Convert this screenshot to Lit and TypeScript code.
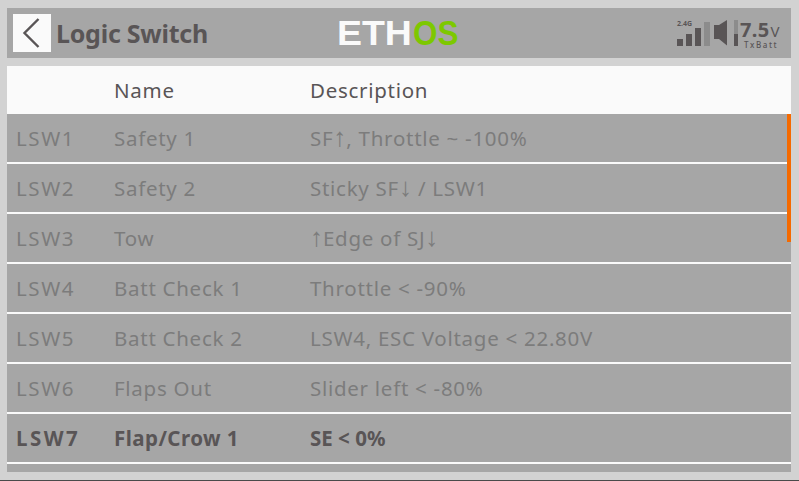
import { LitElement, html, css } from "lit";
import { customElement } from "lit/decorators.js";

const rows = [
  ["LSW1", "Safety 1", "SF↑, Throttle ~ -100%"],
  ["LSW2", "Safety 2", "Sticky SF↓ / LSW1"],
  ["LSW3", "Tow", "↑Edge of SJ↓"],
  ["LSW4", "Batt Check 1", "Throttle < -90%"],
  ["LSW5", "Batt Check 2", "LSW4, ESC Voltage < 22.80V"],
  ["LSW6", "Flaps Out", "Slider left < -80%"],
  ["LSW7", "Flap/Crow 1", "SE < 0%"],
];

const withArrows = (text: string) =>
  text.split(/([↑↓])/).map((part) => (part === "↑" || part === "↓" ? html`<span class="arrow">${part}</span>` : part));

@customElement("app-root")
export class AppRoot extends LitElement {
  static styles = css`
    :host {
      display: block;
      width: 799px;
      height: 481px;
      overflow: hidden;
      background: #d2d2d2;
      font-family: "Noto Sans", "Open Sans", sans-serif;
      color: #595556;
    }
    .page {
      display: flex;
      flex-direction: column;
      height: 480px;
      padding: 8px 8px 8px 7px;
      box-sizing: border-box;
    }
    .rule { height: 1px; background: #4a4a4a; }
    .head {
      height: 50px;
      flex: none;
      background: #a6a6a6;
      display: flex;
      align-items: center;
      padding: 0 11px 0 6px;
    }
    .back {
      width: 38px;
      height: 38px;
      background: #fafafa;
      display: flex;
      align-items: center;
      justify-content: center;
    }
    .back svg { display: block; }
    .title {
      width: 281px;
      margin-left: 5px;
      font-size: 25px;
      font-weight: 700;
      line-height: 36px;
      letter-spacing: -0.25px;
      white-space: nowrap;
    }
    .logo {
      display: flex;
      width: 122px;
      height: 26px;
      font-family: "Liberation Sans", sans-serif;
      font-weight: 700;
      font-size: 35px;
      line-height: 26px;
    }
    .eth { width: 76px; color: #fafafa; transform: scaleX(1.07); transform-origin: left center; white-space: nowrap; }
    .os { width: 46px; color: #7dc800; transform: scaleX(0.9); transform-origin: left center; white-space: nowrap; }
    .status { margin-left: auto; display: flex; align-items: flex-start; height: 26px; }
    .bars { position: relative; display: flex; align-items: flex-end; gap: 3px; height: 26px; width: 33px; }
    .bars i { display: block; flex: none; width: 6px; background: #595556; }
    .bars i.off { background: #8c8c8c; }
    .ghz { position: absolute; left: 0; top: 0; font-size: 7px; font-weight: 700; line-height: 8px; white-space: nowrap; }
    .speaker { display: block; margin-left: 4px; }
    .batt { margin-left: 2px; width: 40px; }
    .volt { display: flex; align-items: baseline; font-size: 20px; font-weight: 700; line-height: 19px; letter-spacing: 0.3px; white-space: nowrap; }
    .volt span { font-size: 15px; font-weight: 400; margin-left: 1px; }
    .tx { font-size: 8px; font-weight: 500; line-height: 7px; letter-spacing: 1.6px; white-space: nowrap; margin-left: 4px; }
    .table { margin-top: 8px; flex: 1; background: #a6a6a6; position: relative; overflow: hidden; }
    .row {
      display: grid;
      grid-template-columns: 98px 196px 1fr;
      align-items: center;
      box-sizing: border-box;
      height: 50px;
      border-bottom: 2px solid #fafafa;
      padding-left: 9px;
      font-size: 20.5px;
      letter-spacing: 0.72px;
      color: #7c7c7c;
      white-space: nowrap;
    }
    .row > span:first-child { letter-spacing: 1.6px; }
    .row.th { height: 48px; border: 0; background: #fafafa; color: #595556; }
    .row.active { color: #595556; font-weight: 700; letter-spacing: 0.45px; }
    .row.active > span:first-child { letter-spacing: 2.5px; }
    .row.active > span:last-child { letter-spacing: 0; }
    .arrow { font-family: "Liberation Sans", sans-serif; font-size: 26px; line-height: 0; letter-spacing: 0; }
    .thumb { position: absolute; right: 0; top: 48px; width: 4px; height: 128px; background: #f56a00; }
  `;

  render() {
    return html`
      <div class="page">
        <div class="head">
          <div class="back">
            <svg width="38" height="38" viewBox="0 0 38 38" fill="none">
              <path d="M25.5 5 L11.5 19 L25.5 33" stroke="#595556" stroke-width="2.4" />
            </svg>
          </div>
          <div class="title">Logic Switch</div>
          <div class="logo"><span class="eth">ETH</span><span class="os">OS</span></div>
          <div class="status">
            <div class="bars">
              <span class="ghz">2.4G</span>
              <i style="height:7px"></i><i style="height:12px"></i><i style="height:18px"></i
              ><i class="off" style="height:24px"></i>
            </div>
            <svg class="speaker" width="24" height="26" viewBox="0 0 24 26">
              <path d="M0 5 H5 L13 0 V25.5 L5 19 H0 Z" fill="#595556" />
              <rect x="20" y="0" width="4" height="14" fill="#8c8c8c" />
              <rect x="20" y="14" width="4" height="12" fill="#595556" />
            </svg>
            <div class="batt">
              <div class="volt">7.5<span>V</span></div>
              <div class="tx">TxBatt</div>
            </div>
          </div>
        </div>
        <div class="table">
          <div class="row th"><span></span><span>Name</span><span>Description</span></div>
          ${rows.map(
            (r, i) => html`<div class="row ${i === 6 ? "active" : ""}">
              <span>${r[0]}</span><span>${r[1]}</span><span>${withArrows(r[2])}</span>
            </div>`
          )}
          <div class="thumb"></div>
        </div>
      </div>
      <div class="rule"></div>
    `;
  }
}
